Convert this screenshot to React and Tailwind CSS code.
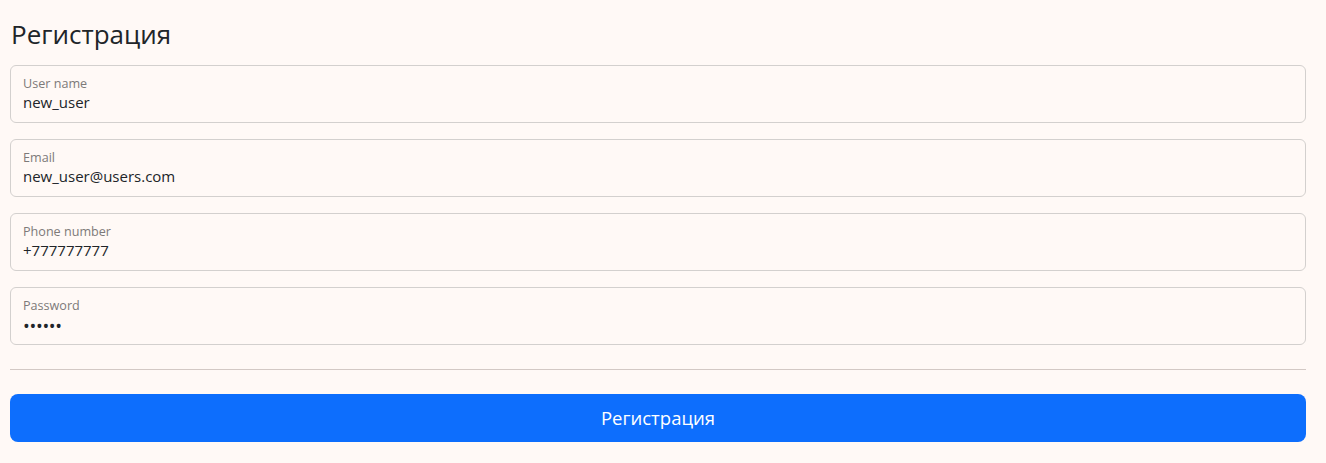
import React from "react";

function Field({ label, value, type }) {
  return (
    <div className="h-[58px] rounded-[6px] border border-[#d3d0ce] pl-[12px] pt-[10px] mb-4">
      <div className="text-[12.6px] leading-[16px] text-[#7d7a79]">{label}</div>
      {type === "password" ? (
        <div className="text-[#212529] text-[18px] leading-[20px] tracking-[-0.3px] pt-[2px]">{value}</div>
      ) : (
        <div className="text-[#212529] text-[15px] leading-[20px]">{value}</div>
      )}
    </div>
  );
}

export default function App() {
  return (
    <div className="min-h-[463px] bg-[#fff9f6] pl-[10px] pr-[20px] pt-[17px]" style={{ fontFamily: '"Open Sans", "Noto Sans", sans-serif' }}>
      <h3 className="text-[26px] leading-[34px] text-[#212529] mb-[14px] ml-[1px]">Регистрация</h3>
      <Field label="User name" value="new_user" />
      <Field label="Email" value="new_user@users.com" />
      <Field label="Phone number" value="+777777777" />
      <Field label="Password" value="••••••" type="password" />
      <hr className="border-0 border-t border-[#d3c9c5] mt-[24px] mb-[24px]" />
      <button className="w-full h-[48px] rounded-[8px] bg-[#0d6efd] text-white text-[18.5px]">Регистрация</button>
    </div>
  );
}
